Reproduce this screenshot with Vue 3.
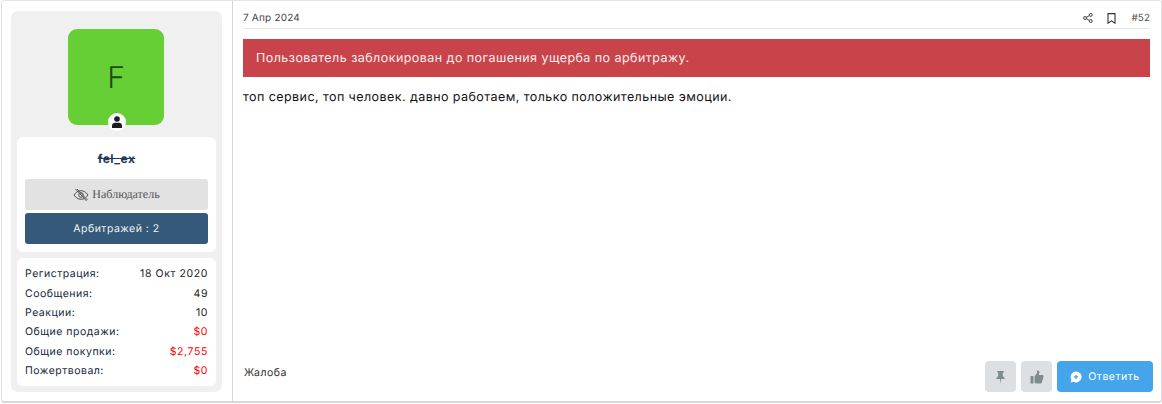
<template>
  <div class="post">
    <aside class="sidebar">
      <div class="panel">
        <div class="avatar-wrap">
          <div class="avatar">F</div>
          <span class="status">
            <svg width="12" height="12" viewBox="0 0 12 12"><circle cx="6" cy="3" r="2.8" fill="#1c1c1e" /><path d="M1 12V9.6C1 7.9 2.3 6.8 4 6.8h4c1.700 0 3 1.100 3 2.800V12z" fill="#1c1c1e" /></svg>
          </span>
        </div>
        <div class="user-card">
          <div class="username">fel_ex</div>
          <div class="btn-watch">
            <svg width="16" height="14" viewBox="0 0 16 14" fill="none" stroke="#555" stroke-width="1"><path d="M1 7c2-3 4.300-4.300 7-4.300S13 4 15 7c-2 3-4.300 4.300-7 4.300S3 10 1 7z" /><circle cx="8" cy="7" r="2.300" /><path d="M2.500 1l11 12" /><path d="M4 1l10.500 11" /></svg>
            <span>Наблюдатель</span>
          </div>
          <div class="btn-arb">Арбитражей : 2</div>
        </div>
        <div class="stats">
          <div class="stat-row" v-for="s in stats" :key="s.label">
            <span class="stat-label">{{ s.label }}</span>
            <span class="stat-value" :class="{ red: s.red }">{{ s.value }}</span>
          </div>
        </div>
      </div>
    </aside>
    <main class="content">
      <div class="post-head">
        <span class="date">7 Апр 2024</span>
        <div class="head-actions">
          <svg width="10" height="10" viewBox="0 0 12 12" fill="none" stroke="#333" stroke-width="1.100"><circle cx="9.300" cy="2.300" r="1.800" /><circle cx="2.500" cy="6" r="1.800" /><circle cx="9.300" cy="9.700" r="1.800" /><path d="M4 5.200l3.800-2.100M4 6.800l3.800 2.100" /></svg>
          <svg width="9" height="11" viewBox="0 0 9 11" fill="none" stroke="#333" stroke-width="1.100"><path d="M1 .6h7v9.600L4.500 7.800 1 10.200z" /></svg>
          <span class="num">#52</span>
        </div>
      </div>
      <div class="ban">Пользователь заблокирован до погашения ущерба по арбитражу.</div>
      <p class="message">топ сервис, топ человек. давно работаем, только положительные эмоции.</p>
      <div class="post-foot">
        <span class="report">Жалоба</span>
        <div class="foot-actions">
          <span class="icon-btn">
            <svg width="11" height="14" viewBox="0 0 12 14" fill="#7f8c8d"><path d="M2.500 0.500h7v1.300L8.500 2.500V6l2 2v1.200H6.600L6 14l-.6-4.800H1.500V8l2-2V2.500l-1-.7z" /></svg>
          </span>
          <span class="icon-btn">
            <svg width="14" height="14" viewBox="0 0 14 14" fill="#7f8c8d"><rect x="0.500" y="6" width="3" height="7.500" rx="0.600" /><path d="M4.500 6.500L7 3V1c0-.6 1.900-.8 2.300.6.300 1-.3 2.500-.6 3.400h3.600c1 0 1.500.9 1.200 1.700l-1.600 5.700c-.2.700-.7 1-1.300 1H6c-.8 0-1.500-.5-1.500-1.300z" /></svg>
          </span>
          <span class="reply">
            <svg width="12" height="12" viewBox="0 0 12 12"><path d="M6 .5a5.500 5.500 0 1 1-2.600 10.300L.6 11.500l.8-2.700A5.500 5.500 0 0 1 6 .5z" fill="#fff" /><path d="M6 3.700v4.200M3.900 5.800h4.200" stroke="#45a5ea" stroke-width="1.200" /></svg>
            Ответить
          </span>
        </div>
      </div>
    </main>
  </div>
</template>

<script setup>
const stats = [
  { label: 'Регистрация:', value: '18 Окт 2020' },
  { label: 'Сообщения:', value: '49' },
  { label: 'Реакции:', value: '10' },
  { label: 'Общие продажи:', value: '$0', red: true },
  { label: 'Общие покупки:', value: '$2,755', red: true },
  { label: 'Пожертвовал:', value: '$0', red: true }
]
</script>

<style>
body {
  background: #fff;
}
</style>

<style scoped>
.post {
  display: flex;
  box-sizing: border-box;
  width: 1161px;
  height: 403px;
  margin-left: 1px;
  background: #fff;
  border: 1px solid #ddd;
  border-top-color: #e4e4e4;
  border-bottom: 2px solid #d8d8d8;
  border-radius: 3px;
  font-family: Inter, "Liberation Sans", sans-serif;
  text-rendering: geometricPrecision;
  letter-spacing: 0.5px;
  color: #111;
}

.sidebar {
  box-sizing: border-box;
  width: 231px;
  flex-shrink: 0;
  padding: 10px 9px;
  border-right: 1px solid #d6d6d6;
}

.panel {
  box-sizing: border-box;
  width: 211px;
  height: 381px;
  padding: 18px 6px 6px;
  background: #f0f0f0;
  border-radius: 7px;
}

.avatar-wrap {
  position: relative;
  width: 96px;
  height: 96px;
  margin: 0 0 12px 51px;
}

.avatar {
  display: flex;
  align-items: center;
  justify-content: center;
  box-sizing: border-box;
  height: 96px;
  padding-top: 1px;
  background: #66cf36;
  border-radius: 9px;
  color: #234a10;
  font-size: 30px;
  font-weight: 300;
  letter-spacing: 0;
}

.status {
  position: absolute;
  left: 40px;
  bottom: -6px;
  display: flex;
  align-items: center;
  justify-content: center;
  width: 18px;
  height: 18px;
  background: #fff;
  border-radius: 50%;
}

.user-card {
  box-sizing: border-box;
  height: 115px;
  padding: 14px 8px 8px;
  background: #fff;
  border-radius: 6px;
}

.username {
  height: 28px;
  text-align: center;
  font-size: 12px;
  font-weight: 700;
  line-height: 15px;
  letter-spacing: 0.5px;
  color: #1f3a57;
  text-decoration: line-through;
}

.btn-watch {
  display: flex;
  align-items: center;
  justify-content: center;
  gap: 3px;
  height: 31px;
  margin-bottom: 3px;
  background: #e2e2e2;
  border-radius: 3px;
  font-family: "Liberation Serif", serif;
  font-size: 12px;
  letter-spacing: 0;
  color: #555;
}

.btn-arb {
  height: 31px;
  line-height: 31px;
  text-align: center;
  background: #34597b;
  border-radius: 3px;
  font-size: 10.500px;
  color: #f0f0f0;
}

.stats {
  box-sizing: border-box;
  height: 128px;
  margin-top: 6px;
  padding: 6.300px 8px 6px;
  background: #fff;
  border-radius: 6px;
  font-size: 10.500px;
  color: #222;
}

.stat-row {
  display: flex;
  justify-content: space-between;
  height: 19.400px;
  line-height: 19.400px;
}

.stat-label {
  color: #14283c;
}

.stat-value {
  letter-spacing: 0.6px;
}

.red {
  color: #f00;
}

.content {
  flex: 1;
  display: flex;
  flex-direction: column;
  min-width: 0;
  padding: 0 8px 9px 10px;
}

.post-head {
  display: flex;
  align-items: flex-end;
  justify-content: space-between;
  flex-shrink: 0;
  box-sizing: border-box;
  width: 907px;
  height: 28px;
  padding-bottom: 4px;
  border-bottom: 1px solid #e6e6e6;
  font-size: 10px;
  letter-spacing: 0.2px;
  color: #444;
}

.head-actions {
  display: flex;
  align-items: center;
  gap: 14px;
}

.num {
  margin-left: 1px;
  letter-spacing: 0;
  color: #555;
}

.ban {
  width: 907px;
  box-sizing: border-box;
  flex-shrink: 0;
  height: 38px;
  margin-top: 10px;
  padding-left: 13px;
  line-height: 39px;
  letter-spacing: 0.45px;
  background: #c9444a;
  color: #fbeeee;
  font-size: 12.500px;
}

.message {
  flex: 1;
  margin: 13px 0 0;
  font-size: 12.500px;
  line-height: 16px;
  letter-spacing: 0.43px;
}

.post-foot {
  display: flex;
  justify-content: space-between;
  padding-left: 1px;
}

.report {
  margin-top: 5px;
  font-size: 10.500px;
  color: #333;
}

.foot-actions {
  display: flex;
  gap: 5px;
}

.icon-btn {
  display: flex;
  align-items: center;
  justify-content: center;
  width: 31px;
  height: 31px;
  background: #dce0e3;
  border-radius: 4px;
}

.reply {
  display: flex;
  align-items: center;
  justify-content: center;
  gap: 6px;
  width: 96px;
  height: 31px;
  background: #45a5ea;
  border-radius: 4px;
  font-size: 10.500px;
  color: #fff;
}
</style>
